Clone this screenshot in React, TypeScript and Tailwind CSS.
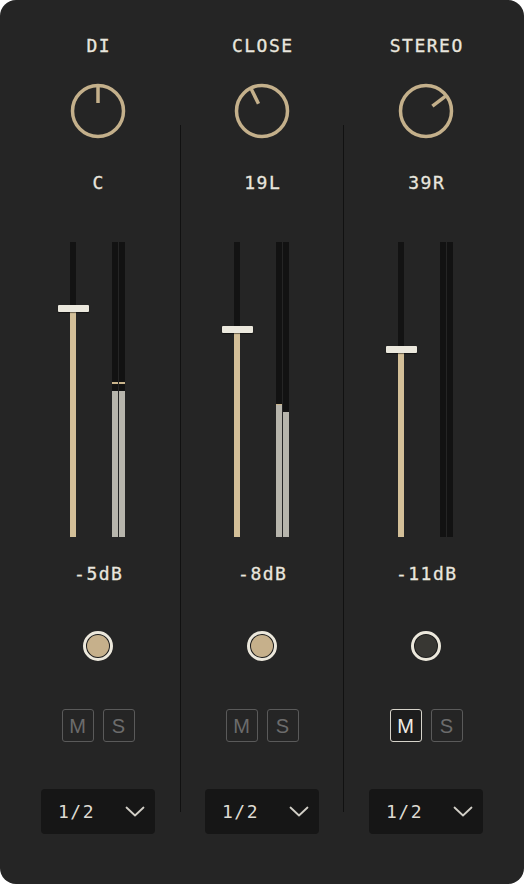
import React from 'react';

const mono = { fontFamily: '"DejaVu Sans Mono", "Liberation Mono", monospace' };

type Channel = {
  name: string;
  pan: string;
  angle: number;
  thumb: number; // thumb centre, px from fader top
  level: string;
  meters: { fill: number | null; peak?: number | null; tanEdge?: boolean }[];
  dot: 'tan' | 'dark';
  mute: boolean;
};

const channels: Channel[] = [
  { name: 'DI', pan: 'C', angle: 0, thumb: 66, level: '-5dB', meters: [{ fill: 149, peak: 140 }, { fill: 149, peak: 140 }], dot: 'tan', mute: false },
  { name: 'CLOSE', pan: '19L', angle: -26, thumb: 87, level: '-8dB', meters: [{ fill: 162, tanEdge: true }, { fill: 170 }], dot: 'tan', mute: false },
  { name: 'STEREO', pan: '39R', angle: 53, thumb: 107, level: '-11dB', meters: [{ fill: null }, { fill: null }], dot: 'dark', mute: true },
];

const FADER_H = 295;

function Knob({ angle }: { angle: number }) {
  const r = (angle * Math.PI) / 180;
  const x1 = 28 + Math.sin(r) * 8;
  const y1 = 28 - Math.cos(r) * 8;
  const x2 = 28 + Math.sin(r) * 25;
  const y2 = 28 - Math.cos(r) * 25;
  return (
    <svg width="56" height="56" viewBox="0 0 56 56">
      <circle cx="28" cy="28" r="25.5" fill="none" stroke="#c4b08b" strokeWidth="3.5" />
      <line x1={x1} y1={y1} x2={x2} y2={y2} stroke="#c4b08b" strokeWidth="3.5" />
    </svg>
  );
}

function Meter({ fill, peak, tanEdge }: { fill: number | null; peak?: number | null; tanEdge?: boolean }) {
  return (
    <div className="relative w-[6px] h-full bg-[#121212]">
      {peak != null && (
        <div className="absolute left-0 right-0 h-[1.5px] bg-[#c9b48c]" style={{ top: peak }} />
      )}
      {fill != null && (
        <div
          className={`absolute left-0 right-0 bottom-0 bg-[#b7b5ac] ${tanEdge ? 'border-t border-[#c9b48c]' : ''}`}
          style={{ top: fill }}
        />
      )}
    </div>
  );
}

function Strip({ ch }: { ch: Channel }) {
  return (
    <div className="flex flex-col items-center text-[#e9e6de]" style={mono}>
      <div className="mt-[36px] h-5 leading-5 text-[18px] tracking-[1.5px] pl-[1.5px] [-webkit-text-stroke:0.3px_currentColor]">{ch.name}</div>
      <div className="mt-[27px] h-[56px]">
        <Knob angle={ch.angle} />
      </div>
      <div className="mt-[34px] h-5 leading-5 text-[18px] tracking-[1.5px] pl-[1.5px] [-webkit-text-stroke:0.3px_currentColor]">{ch.pan}</div>

      {/* fader + meters */}
      <div className="mt-[49px] flex w-[80px] pr-[13px]" style={{ height: FADER_H }}>
        <div className="relative w-[31px] h-full flex justify-center">
          <div className="w-[6px] h-full bg-[#131313]" />
          <div
            className="absolute left-0 right-0 mx-auto w-[6px] bottom-0 bg-[#d3bf98]"
            style={{ top: ch.thumb }}
          />
          <div
            className="absolute left-0 w-[31px] h-[7px] rounded-[1px] bg-[#ebe8dd] shadow-[0_1px_1px_rgba(0,0,0,0.5)]"
            style={{ top: ch.thumb - 3 }}
          />
        </div>
        <div className="ml-[24px] flex gap-[1px] h-full">
          {ch.meters.map((m, i) => (
            <Meter key={i} {...m} />
          ))}
        </div>
      </div>

      <div className="mt-[27px] h-5 leading-5 text-[18px] tracking-[1.5px] pl-[1.5px] [-webkit-text-stroke:0.3px_currentColor]">{ch.level}</div>

      <div className="mt-[47px] w-[30px] h-[30px] rounded-full border-[3px] border-[#ece8dc] p-[1px] bg-[#1c1c1c]">
        <div className={`w-full h-full rounded-full ${ch.dot === 'tan' ? 'bg-[#c6b08b]' : 'bg-[#383733]'}`} />
      </div>

      <div className="mt-[48px] flex gap-[9px]" style={{ fontFamily: '"Liberation Sans", Arial, sans-serif' }}>
        <div
          className={`w-[32px] h-[33px] rounded-[3px] border-[1.5px] flex items-center justify-center text-[20px] ${
            ch.mute ? 'border-[#d6d3ca] text-[#efece4] bg-[#1d1d1d]' : 'border-[#5a5a5a] text-[#6c6c6c]'
          }`}
        >
          M
        </div>
        <div className="w-[32px] h-[33px] rounded-[3px] border-[1.5px] border-[#5a5a5a] text-[#6c6c6c] flex items-center justify-center text-[20px]">
          S
        </div>
      </div>

      <div className="mt-[47px] w-[114px] h-[45px] rounded-[4px] bg-[#161616] flex items-center justify-between pl-[17px] pr-[10px]">
        <span className="text-[18px] tracking-[1.5px] text-[#dedbd3]">1/2</span>
        <svg width="20" height="11" viewBox="0 0 20 11">
          <polyline points="1.5,1.5 10,9.5 18.5,1.5" fill="none" stroke="#d2cfc7" strokeWidth="1.8" strokeLinecap="round" strokeLinejoin="round" />
        </svg>
      </div>
    </div>
  );
}

export default function App() {
  return (
    <div className="w-[524px] h-[884px] bg-white">
      <div className="w-full h-full rounded-[16px] bg-[#252525] px-4 grid grid-cols-[164px_1px_162px_1px_164px]">
        <Strip ch={channels[0]} />
        <div className="mt-[125px] h-[687px] bg-[#111111]" />
        <Strip ch={channels[1]} />
        <div className="mt-[125px] h-[687px] bg-[#111111]" />
        <Strip ch={channels[2]} />
      </div>
    </div>
  );
}
